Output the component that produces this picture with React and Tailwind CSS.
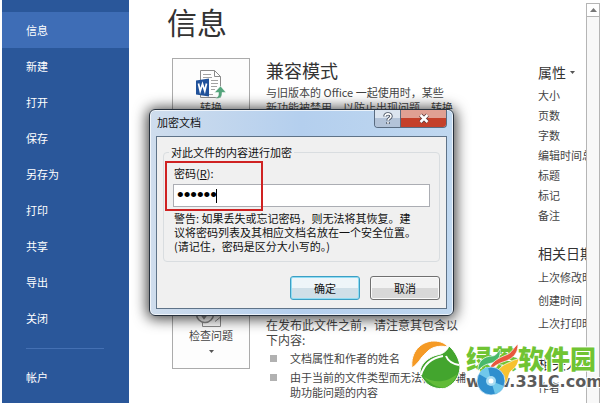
import React from "react";

const MENU = ["信息", "新建", "打开", "保存", "另存为", "打印", "共享", "导出", "关闭"];
const PROPS = ["大小", "页数", "字数", "编辑时间总计", "标题", "标记", "备注"];
const DATES = ["上次修改时间", "创建时间", "上次打印时间"];

function MenuItem({ label, active }) {
  return (
    <li>
      <button
        type="button"
        className={
          "flex h-9 w-full items-center pl-6 text-left text-[11px] text-white " +
          (active ? "bg-[#3e6db6]" : "")
        }
      >
        {label}
      </button>
    </li>
  );
}

function Sidebar() {
  return (
    <nav className="ml-0.5 w-[127px] shrink-0 bg-[#2a579a] pt-3">
      <ul>
        {MENU.map((m, i) => (
          <MenuItem key={m} label={m} active={i === 0} />
        ))}
      </ul>
      <hr className="mt-3 mb-[10px] ml-6 w-[78px] border-[#4470b3]" />
      <ul>
        <MenuItem label="帐户" />
      </ul>
    </nav>
  );
}

function ConvertIcon() {
  return (
    <svg width="32" height="30" viewBox="0 0 32 30" aria-hidden="true">
      <path d="M5.500 .5h14l6 6v21h-20z" fill="#fff" stroke="#8c8c8c" />
      <path d="M19.500 .5v6h6" fill="none" stroke="#8c8c8c" />
      <path d="M8 4.500h8M8 7.500h9M16 10.500h7M16 13.500h7M16 16.500h6M16 19.500h4M8 24.500h10" stroke="#a3a3a3" />
      <path d="M1 10.500l13-2v18l-13-2z" fill="#21529b" />
      <path d="M3.500 13.500l1.700 7.500 2.300-7 2.300 7 1.700-7.500" fill="none" stroke="#fff" strokeWidth="1.700" />
      <path d="M25.500 16l-6 6.500h4V24c0 2-1 3.500-3.500 4.500 4 .5 7-1 7-4.500v-1.500h4z" fill="#55a57d" stroke="#fff" strokeWidth=".5" />
    </svg>
  );
}

function InspectIcon() {
  return (
    <svg width="32" height="28" viewBox="0 0 32 28" aria-hidden="true">
      <path d="M7.500 .5h13l5 5v21h-18z" fill="#fff" stroke="#8c8c8c" />
      <circle cx="10" cy="14" r="8.500" fill="#fff" stroke="#8c8c8c" strokeWidth="1.500" />
      <path d="M6 14l3 4 6-8" fill="none" stroke="#8c8c8c" strokeWidth="2" />
      <path d="M20 21.500l5-4" stroke="#8c8c8c" />
    </svg>
  );
}

function ProtectIcon() {
  return (
    <svg width="32" height="28" viewBox="0 0 32 28" aria-hidden="true">
      <path d="M9 12V7a6 6 0 0 1 12 0v5" fill="none" stroke="#8c8c8c" strokeWidth="3" />
      <path d="M5 12h20v14H5z" fill="#e3b94c" />
    </svg>
  );
}

function Card({ icon, label, menu }) {
  return (
    <button
      type="button"
      className="flex h-[81px] w-[78px] shrink-0 flex-col items-center border border-[#ababab] bg-[#fdfdfd] pt-[11px] text-[11px] leading-[14px] text-[#444]"
    >
      {icon}
      <span>{label}</span>
      {menu && (
        <svg className="mt-2" width="5" height="3" viewBox="0 0 5 3" aria-hidden="true">
          <path d="M0 0h5L2.500 3z" fill="#555" />
        </svg>
      )}
    </button>
  );
}

function InfoSections() {
  return (
    <div className="w-[300px] shrink-0 pl-[5px] text-[11px] leading-[15px] text-[#444]">
      <section className="mb-[38px] flex gap-4">
        <Card icon={<ConvertIcon />} label="转换" />
        <div className="whitespace-nowrap">
          <h2 className="mb-[3px] text-[18px] leading-6 text-[#333]">兼容模式</h2>
          <p>
            与旧版本的 Office 一起使用时，某些
            <br />
            新功能被禁用，以防止出现问题。转换
            <br />
            此文件将启用这些功能，但可能会更改
          </p>
        </div>
      </section>
      <section className="mb-[30px] flex gap-4">
        <Card icon={<ProtectIcon />} label="保护文档" menu />
        <div className="whitespace-nowrap">
          <h2 className="mb-[3px] text-[18px] leading-6 text-[#333]">保护文档</h2>
          <p>控制其他人可以对此文档所做的更改类</p>
          <p>型。</p>
        </div>
      </section>
      <section className="flex gap-4">
        <Card icon={<InspectIcon />} label="检查问题" menu />
        <div className="whitespace-nowrap">
          <h2 className="mb-[5px] text-[18px] leading-6 text-[#333]">检查文档</h2>
          <p className="text-[12px]">
            在发布此文件之前，请注意其包含以
            <br />
            下内容:
          </p>
          <ul className="mt-1 flex flex-col gap-1 pl-1">
            <li className="flex gap-[13px]">
              <span className="mt-1 size-[7px] bg-[#b1b1b1]" />
              文档属性和作者的姓名
            </li>
            <li className="flex gap-[13px]">
              <span className="mt-1 size-[7px] bg-[#b1b1b1]" />
              <span>
                由于当前的文件类型而无法检查的辅
                <br />
                助功能问题的内容
              </span>
            </li>
          </ul>
        </div>
      </section>
    </div>
  );
}

function Properties() {
  return (
    <aside className="min-w-0 flex-1 overflow-hidden pt-1 text-[11px] whitespace-nowrap text-[#444]">
      <h2>
        <button type="button" className="flex items-center gap-1 text-[14px] leading-5 text-[#333]">
          属性
          <svg width="5" height="3" viewBox="0 0 5 3" aria-hidden="true">
            <path d="M0 0h5L2.500 3z" fill="#555" />
          </svg>
        </button>
      </h2>
      <ul className="mt-[3px] leading-5">
        {PROPS.map((p) => (
          <li key={p}>{p}</li>
        ))}
      </ul>
      <h2 className="mt-[18px] text-[14px] leading-5 text-[#333]">相关日期</h2>
      <ul className="mt-[3px] leading-[23px]">
        {DATES.map((d) => (
          <li key={d}>{d}</li>
        ))}
      </ul>
      <h2 className="mt-[18px] text-[14px] leading-5 text-[#333]">相关人员</h2>
      <p className="mt-[3px] leading-[23px]">作者</p>
    </aside>
  );
}

function Scrollbar() {
  return (
    <div className="mt-[3px] w-[14px] shrink-0 border-x border-[#b5b5b5] bg-[#f8f8f8]">
      <button
        type="button"
        aria-label="向上滚动"
        className="flex h-[14px] w-full items-center justify-center border-y border-[#b5b5b5] bg-white"
      >
        <svg width="7" height="4" viewBox="0 0 7 4" aria-hidden="true">
          <path d="M0 4L3.500 0 7 4z" fill="#777" />
        </svg>
      </button>
    </div>
  );
}

function Dialog() {
  return (
    <div
      role="dialog"
      aria-labelledby="dlg-title"
      className="absolute top-[109px] left-[149px] w-[305px] rounded-md border border-[#27313d] bg-linear-to-r from-[#cfdded] via-[#b4cfee] to-[#c0d8f0] px-[6px] pb-[6px] text-[11px] text-[#111] shadow-[0_1px_14px_2px_rgba(0,0,0,0.75),inset_0_0_0_1px_rgba(255,255,255,0.7)]"
    >
      <header className="flex h-[26px] items-start justify-between">
        <h1 id="dlg-title" className="pl-px leading-[25px]">
          加密文档
        </h1>
        <div className="flex h-[18px] overflow-hidden rounded-b border border-t-0 border-[#596b80]">
          <button
            type="button"
            aria-label="帮助"
            className="flex w-[26px] items-center justify-center border-r border-[#596b80] bg-linear-to-b from-[#dbe4ef] from-50% to-[#b3c3d8] to-50%"
          >
            <svg width="12" height="13" viewBox="0 0 12 13" aria-hidden="true">
              <path d="M3 4.500C3 1 9 1 9 4.300 9 6.500 6 6.300 6 8.500M6 10v2" fill="none" stroke="#46505f" strokeWidth="3.400" />
              <path d="M3 4.500C3 1 9 1 9 4.300 9 6.500 6 6.300 6 8.500M6 10v1.700" fill="none" stroke="#fff" strokeWidth="1.600" />
            </svg>
          </button>
          <button
            type="button"
            aria-label="关闭"
            className="flex w-[45px] items-center justify-center bg-linear-to-b from-[#e0a093] from-45% to-[#c4402a] to-50%"
          >
            <svg width="12" height="11" viewBox="0 0 12 11" aria-hidden="true">
              <path d="M2.500 2l7 7M9.500 2l-7 7" stroke="#5d3a3a" strokeWidth="4" />
              <path d="M2.500 2l7 7M9.500 2l-7 7" stroke="#fff" strokeWidth="2.500" />
            </svg>
          </button>
        </div>
      </header>
      <form
        onSubmit={(e) => e.preventDefault()}
        className="border border-[#5f7388] bg-[#f0f0f0] px-[6px] pt-[7px] pb-2"
      >
        <fieldset className="rounded-sm border border-[#d9dde0] px-[9px] pb-2">
          <legend className="-ml-1 px-0.5 leading-4">对此文件的内容进行加密</legend>
          <div className="relative">
            <label htmlFor="pwd" className="block pt-[5px] pl-px leading-4">
              密码(<u>R</u>):
            </label>
            <input
              id="pwd"
              type="password"
              defaultValue="123456"
              className="mt-[3px] block h-[23px] w-full border border-[#abadb3] bg-white px-[3px] font-['Liberation_Sans'] text-[19px] text-black outline-none"
            />
            <span className="absolute top-[29px] left-[43px] h-[14px] w-px bg-black" />
            <span className="pointer-events-none absolute top-px -left-2 h-[50px] w-[98px] border-2 border-[#cf2222]" />
          </div>
          <p className="mt-1 pl-px leading-[14px] whitespace-nowrap">
            警告: 如果丢失或忘记密码，则无法将其恢复。建
            <br />
            议将密码列表及其相应文档名放在一个安全位置。
            <br />
            (请记住，密码是区分大小写的。)
          </p>
        </fieldset>
        <div className="mt-[14px] flex justify-end gap-[10px]">
          <button
            type="submit"
            className="h-[24px] w-[70px] rounded-[3px] border border-[#3c9fc4] bg-linear-to-b from-[#eef5f9] from-50% to-[#cfdfe8] to-50% shadow-[inset_0_0_0_1px_#8fdcf3]"
          >
            确定
          </button>
          <button
            type="button"
            className="h-[24px] w-[70px] rounded-[3px] border border-[#707070] bg-linear-to-b from-[#f2f2f2] from-50% to-[#d8d8d8] to-50% shadow-[inset_0_0_0_1px_#fafafa]"
          >
            取消
          </button>
        </div>
      </form>
    </div>
  );
}

function Watermark() {
  return (
    <div className="pointer-events-none absolute top-[340px] left-[411px] flex gap-[5px] whitespace-nowrap">
      <svg width="50" height="52" viewBox="0 0 50 52" aria-hidden="true">
        <path d="M1 28C-1 12 10 1 23 1c6 0 11 2 14 6-9-2-17 0-22 6C9 18 9 22 1 28z" fill="#f59a25" stroke="#fff" />
        <path d="M38 6c6 5 11 14 11 22-1 10-6 16-14 20-9 2-18-1-23-9C4 30 14 18 26 15c6-1 10-4 12-9z" fill="#43a52e" stroke="#fff" />
        <path d="M32 16c-11 2-19 8-22 19M35 16c2 5 7 8 13 9" fill="none" stroke="#fff" strokeWidth="2" />
        <path d="M13 37c5 6 12 10 20 11 7-3 11-7 13-14-9 8-22 10-33 3z" fill="#61bb38" />
      </svg>
      <div className="pt-[3px]">
        <p className="text-[26px] leading-[29px] font-black text-[#70c433] [paint-order:stroke] [-webkit-text-stroke:2px_#fff]">
          绿茶软件园
        </p>
        <p className="pt-px font-['DejaVu_Sans'] text-[16px] leading-[18px] font-bold text-[#5b5b5b] [paint-order:stroke] [-webkit-text-stroke:2px_#fff]">
          www.33LC.com
        </p>
      </div>
      <svg className="absolute top-[3px] left-[64px]" width="46" height="53" viewBox="0 0 46 53" aria-hidden="true">
        <path d="M3 28c-1-10 7-15 14-15 4 0 6-4 8-7 1 8-2 12-8 14-6 1-10 3-14 8z" fill="#49b86b" stroke="#fff" strokeWidth=".7" />
        <path d="M13 29c3-11 11-14 18-17 6-2 7-7 12-11 0 10-5 14-12 17-7 2-12 5-18 11z" fill="#e9573d" stroke="#fff" strokeWidth=".7" />
        <path d="M22 29c5-8 10-8 15-11 3-2 5-1 7-3-1 7-4 10-8 13-3 3-2 9-6 14 0-8-2-12-8-13z" fill="#f7c22f" stroke="#fff" strokeWidth=".7" />
        <circle cx="16" cy="38" r="14" fill="#2f8fce" stroke="#e6f5fc" strokeWidth=".7" />
        <path d="M16 38L4 31a14 14 0 0 1 9-7zM16 38l13 5a14 14 0 0 1-9 8z" fill="#70c8eb" />
        <circle cx="16" cy="38" r="5" fill="#a8dcf2" />
        <circle cx="16" cy="38" r="2.500" fill="#fff" />
      </svg>
    </div>
  );
}

export default function App() {
  return (
    <div className="relative flex h-screen overflow-hidden bg-white font-['Noto_Sans_CJK_SC',sans-serif]">
      <Sidebar />
      <main className="flex min-w-0 flex-1 flex-col pt-[3px] pl-[38px]">
        <h1 className="mb-[19px] text-[30px] leading-9 text-[#333]">信息</h1>
        <div className="flex gap-[71px]">
          <InfoSections />
          <Properties />
        </div>
      </main>
      <Scrollbar />
      <Dialog />
      <Watermark />
    </div>
  );
}
